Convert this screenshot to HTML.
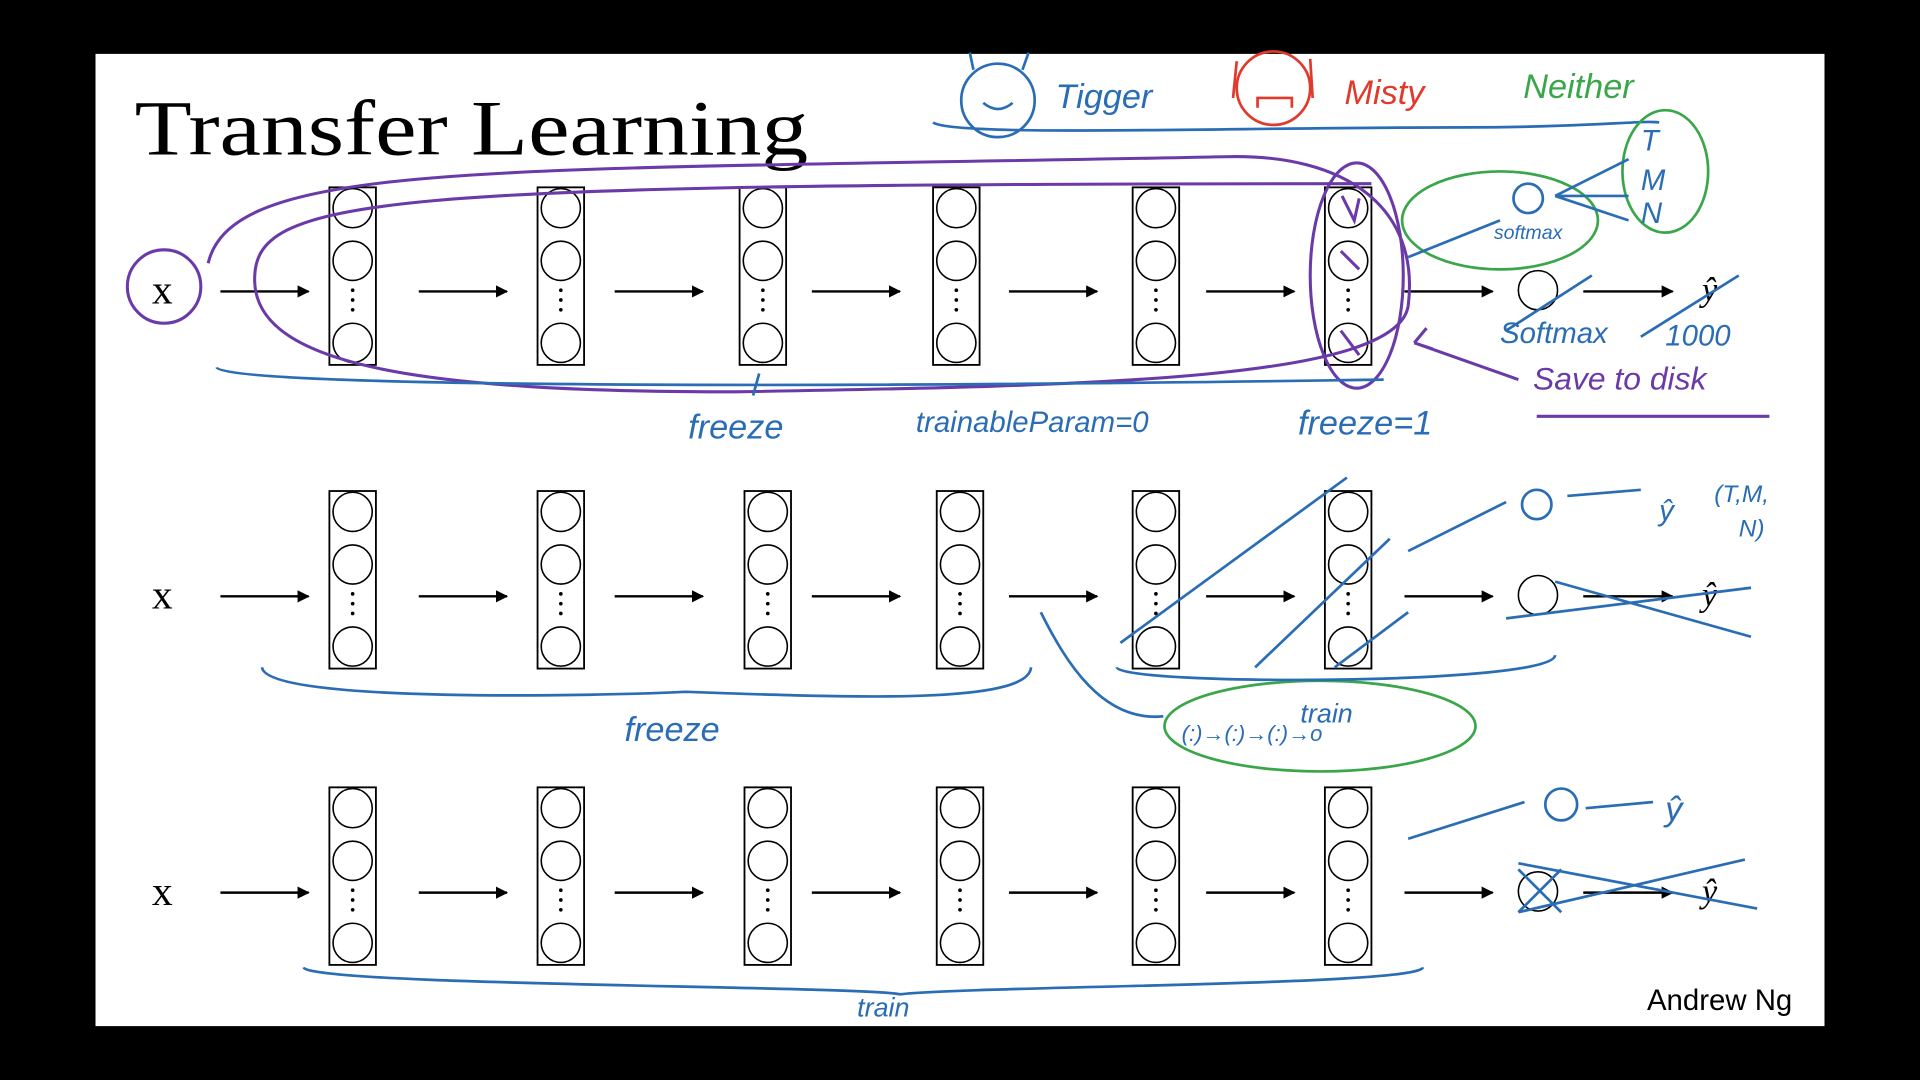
<!DOCTYPE html>
<html><head><meta charset="utf-8"><style>
html,body{margin:0;padding:0;background:#000;width:1920px;height:1080px;overflow:hidden}
svg{display:block}
.h{font-family:"Liberation Sans",sans-serif;font-style:italic}
</style></head><body>
<svg width="1920" height="1080" viewBox="0 0 1568 882" preserveAspectRatio="none" xmlns="http://www.w3.org/2000/svg">
<defs>
<marker id="a" markerWidth="10" markerHeight="10" refX="9" refY="5" orient="auto" markerUnits="userSpaceOnUse"><path d="M0,0 L10,5 L0,10z" fill="#000"/></marker>
<g id="col"><rect x="-19" y="0" width="38" height="145" fill="none" stroke="#000" stroke-width="1.5"/><circle cx="0" cy="17" r="16" fill="none" stroke="#000" stroke-width="1.3"/><circle cx="0" cy="60" r="16" fill="none" stroke="#000" stroke-width="1.3"/><circle cx="0" cy="127" r="16" fill="none" stroke="#000" stroke-width="1.3"/><circle cx="0" cy="84" r="1.5"/><circle cx="0" cy="92" r="1.5"/><circle cx="0" cy="100" r="1.5"/></g>
</defs>
<rect x="78" y="44" width="1412" height="794" fill="#fff"/>
<text x="110" y="126" font-family="Liberation Serif,serif" font-size="64" textLength="550" lengthAdjust="spacingAndGlyphs">Transfer Learning</text>
<text x="1345" y="825" font-family="Liberation Sans,sans-serif" font-size="24">Andrew Ng</text>
<g stroke="#000" stroke-width="2" marker-end="url(#a)">
<line x1="180" y1="238" x2="252" y2="238"/><line x1="342" y1="238" x2="414" y2="238"/><line x1="502" y1="238" x2="574" y2="238"/><line x1="663" y1="238" x2="735" y2="238"/><line x1="824" y1="238" x2="896" y2="238"/><line x1="985" y1="238" x2="1057" y2="238"/><line x1="1147" y1="238" x2="1219" y2="238"/><line x1="1293" y1="238" x2="1366" y2="238"/>
<line x1="180" y1="487" x2="252" y2="487"/><line x1="342" y1="487" x2="414" y2="487"/><line x1="502" y1="487" x2="574" y2="487"/><line x1="663" y1="487" x2="735" y2="487"/><line x1="824" y1="487" x2="896" y2="487"/><line x1="985" y1="487" x2="1057" y2="487"/><line x1="1147" y1="487" x2="1219" y2="487"/><line x1="1293" y1="487" x2="1366" y2="487"/>
<line x1="180" y1="729" x2="252" y2="729"/><line x1="342" y1="729" x2="414" y2="729"/><line x1="502" y1="729" x2="574" y2="729"/><line x1="663" y1="729" x2="735" y2="729"/><line x1="824" y1="729" x2="896" y2="729"/><line x1="985" y1="729" x2="1057" y2="729"/><line x1="1147" y1="729" x2="1219" y2="729"/><line x1="1293" y1="729" x2="1366" y2="729"/>
</g>
<g font-family="Liberation Serif,serif" font-size="34"><text x="124" y="248">x</text><text x="124" y="497">x</text><text x="124" y="739">x</text>
<text x="1390" y="246" font-style="italic" font-size="28">ŷ</text><text x="1390" y="495" font-style="italic" font-size="28">ŷ</text><text x="1390" y="737" font-style="italic" font-size="28">ŷ</text></g>
<g fill="none" stroke="#000" stroke-width="1.3"><circle cx="1256" cy="237" r="16"/><circle cx="1256" cy="486" r="16"/><circle cx="1256" cy="728" r="16"/></g>
<use href="#col" x="288" y="153"/><use href="#col" x="458" y="153"/><use href="#col" x="623" y="153"/><use href="#col" x="781" y="153"/><use href="#col" x="944" y="153"/><use href="#col" x="1101" y="153"/>
<use href="#col" x="288" y="401"/><use href="#col" x="458" y="401"/><use href="#col" x="627" y="401"/><use href="#col" x="784" y="401"/><use href="#col" x="944" y="401"/><use href="#col" x="1101" y="401"/>
<use href="#col" x="288" y="643"/><use href="#col" x="458" y="643"/><use href="#col" x="627" y="643"/><use href="#col" x="784" y="643"/><use href="#col" x="944" y="643"/><use href="#col" x="1101" y="643"/>
<g fill="none" stroke="#6a3aa8" stroke-width="2.5">
<ellipse cx="134" cy="234" rx="30" ry="30"/>
<path d="M170,215 C190,130 400,140 1000,128 C1100,125 1160,170 1150,250 C1140,310 900,315 600,320 C350,320 210,300 208,230 C206,160 300,150 1120,150"/>
<ellipse cx="1108" cy="225" rx="38" ry="92"/>
<path d="M1155,280 L1240,310 M1155,280 l10,-12 M1155,280 l15,5"/>
<path d="M1255,340 L1445,340"/>
<path d="M1096,160 l10,20 l4,-18 M1095,205 l15,15 M1095,270 l15,20"/>
</g>
<text x="1252" y="318" class="h" font-size="26" fill="#6a3aa8">Save to disk</text>
<g fill="none" stroke="#2a6db5" stroke-width="2.2"><circle cx="815" cy="82" r="30"/><path d="M795,57 l-3,-14 M835,57 l5,-14 M803,84 q12,10 24,0"/><path d="M762,100 C780,112 1000,104 1200,104 C1300,104 1340,98 1355,100"/></g>
<text x="862" y="88" class="h" font-size="28" fill="#2a6db5">Tigger</text>
<g fill="none" stroke="#e03a2c" stroke-width="2.2"><circle cx="1040" cy="72" r="30"/><path d="M1010,50 l-3,30 M1070,48 l2,32 M1027,88 l0,-8 l28,0 l0,8"/></g>
<text x="1098" y="85" class="h" font-size="28" fill="#e03a2c">Misty</text>
<text x="1244" y="80" class="h" font-size="28" fill="#3aa64a">Neither</text>
<g fill="none" stroke="#3aa64a" stroke-width="2.2"><ellipse cx="1225" cy="180" rx="80" ry="40"/><ellipse cx="1360" cy="140" rx="35" ry="50"/><ellipse cx="1078" cy="593" rx="127" ry="37"/></g>
<g fill="none" stroke="#2a6db5" stroke-width="2.2">
<path d="M177,300 C180,315 600,318 1130,310 M620,305 l-5,18"/>
<path d="M1150,210 L1225,180 M1270,160 l60,-30 M1270,160 l60,0 M1270,160 l60,20"/>
<circle cx="1248" cy="162" r="12"/>
<path d="M1230,270 L1300,225 M1340,275 L1420,225"/>
<path d="M214,545 C216,575 500,568 560,565 C700,570 840,575 842,545"/>
<path d="M912,545 C914,560 1270,560 1270,535"/>
<path d="M915,525 L1100,390 M1025,545 L1135,440 M1090,545 L1150,500 M1150,450 L1230,410 M1280,405 L1340,400"/>
<circle cx="1255" cy="412" r="12"/>
<path d="M1230,505 L1430,480 M1270,475 L1430,520"/>
<path d="M850,500 C870,540 900,590 950,585"/>
<path d="M248,790 C252,805 700,805 735,812 C800,805 1160,805 1162,790"/>
<path d="M1150,685 L1245,655 M1295,660 L1350,655"/><circle cx="1275" cy="657" r="13"/>
<path d="M1240,710 L1275,745 M1275,710 L1240,745 M1240,745 L1425,702 M1240,705 L1435,742"/>
</g>
<g class="h" font-size="28" fill="#2a6db5">
<text x="562" y="358">freeze</text><text x="748" y="353" font-size="24">trainableParam=0</text><text x="1060" y="355">freeze=1</text>
<text x="1225" y="280" font-size="24">Softmax</text><text x="1360" y="282" font-size="24">1000</text>
<text x="1340" y="123" font-size="24">T</text><text x="1340" y="155" font-size="24">M</text><text x="1340" y="182" font-size="24">N</text>
<text x="1220" y="195" font-size="16">softmax</text>
<text x="510" y="605">freeze</text><text x="1062" y="590" font-size="22">train</text><text x="700" y="830" font-size="22">train</text>
<text x="1400" y="410" font-size="20">(T,M,</text><text x="1420" y="438" font-size="20">N)</text>
<text x="1355" y="425" font-size="24">ŷ</text><text x="1360" y="670" font-size="28">ŷ</text>
<text x="965" y="605" font-size="18">(:)→(:)→(:)→o</text>
</g>
</svg>
</body></html>
